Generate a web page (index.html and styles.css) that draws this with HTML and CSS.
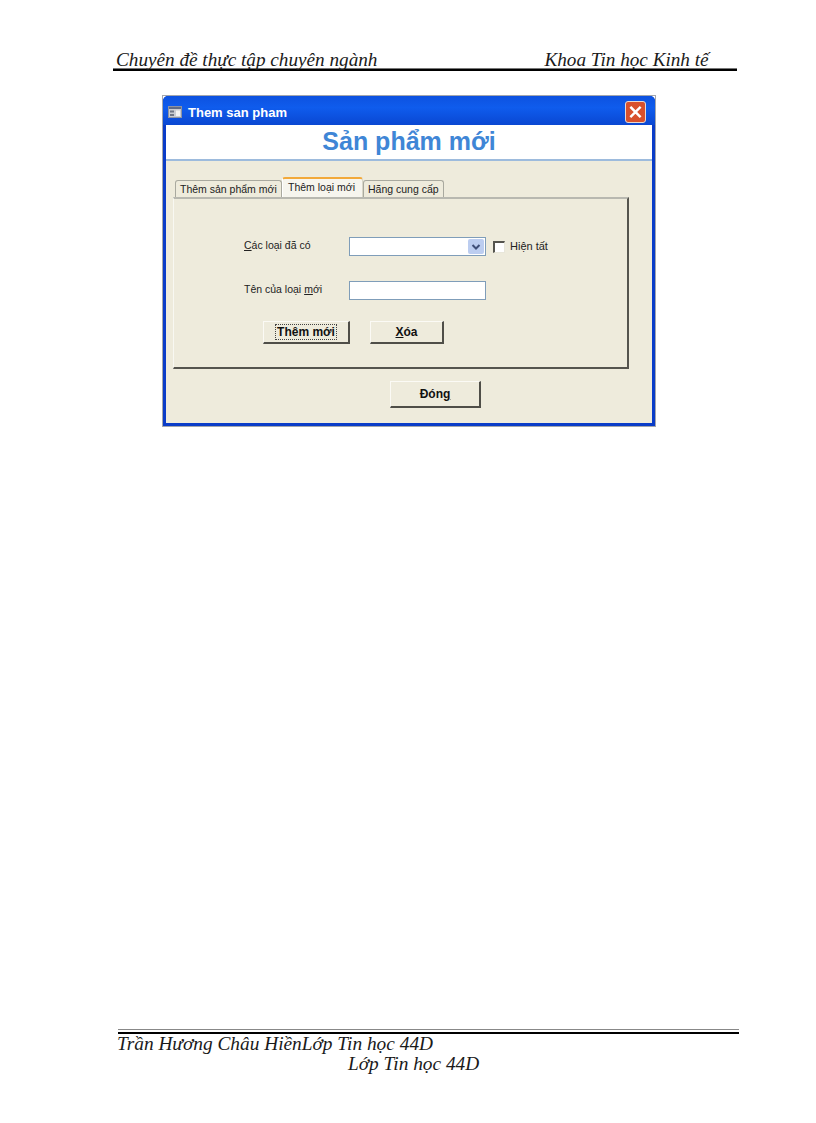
FILE: index.html
```html
<!DOCTYPE html>
<html lang="vi">
<head>
<meta charset="utf-8">
<title>Them san pham</title>
<link rel="stylesheet" href="styles.css">
</head>
<body>
<div class="page">
  <header class="doc-head">
    <span>Chuyên đề thực tập chuyên ngành</span>
    <span class="doc-head-right">Khoa Tin học Kinh tế</span>
  </header>

  <div class="shot">
    <div class="window">
      <div class="titlebar">
        <svg class="app-icon" viewBox="0 0 14 12" width="14" height="12">
          <rect x="0.5" y="0.5" width="13" height="11" fill="#c9ccd2" stroke="#8d93a3"/>
          <rect x="1" y="1" width="12" height="2" fill="#5f6b86"/>
          <rect x="2" y="4.5" width="4" height="2" fill="#6f7686"/>
          <rect x="2" y="8" width="4" height="2" fill="#6f7686"/>
          <rect x="8" y="4.5" width="4" height="5.500" fill="#f2f2f2"/>
        </svg>
        <span class="title-text">Them san pham</span>
        <span class="close-btn">
          <svg viewBox="0 0 20 20" width="20" height="20">
            <path d="M5.500 5.500 L14.500 14.500 M14.500 5.500 L5.500 14.500" stroke="#fff" stroke-width="2.600" stroke-linecap="square"/>
          </svg>
        </span>
      </div>
      <div class="banner">Sản phẩm mới</div>
      <div class="body">
        <div class="tabs">
          <div class="tab">Thêm sản phẩm mới</div>
          <div class="tab tab-active">Thêm loại mới</div>
          <div class="tab tab-last">Hãng cung cấp</div>
        </div>
        <div class="pane">
          <div class="form">
            <label class="label"><u>C</u>ác loại đã có</label>
            <div class="row">
              <div class="combo">
                <span class="combo-arrow">
                  <svg viewBox="0 0 12 12" width="12" height="12">
                    <path d="M2.500 4 L6 7.500 L9.500 4" fill="none" stroke="#3f4f78" stroke-width="2"/>
                  </svg>
                </span>
              </div>
              <span class="check"></span>
              <span class="check-label">Hiện tất</span>
            </div>
            <label class="label label-second">Tên của loại <u>m</u>ới</label>
            <div class="row row-second">
              <div class="input"></div>
            </div>
          </div>
          <div class="actions">
            <button class="btn btn-add"><span class="focus">Thêm mới</span></button>
            <button class="btn btn-del"><u>X</u>óa</button>
          </div>
        </div>
        <div class="foot-btn">
          <button class="btn btn-close">Đón<u>g</u></button>
        </div>
      </div>
    </div>
  </div>

  <footer class="doc-foot">
    <div class="foot-line">Trần Hương Châu HiềnLớp Tin học 44D</div>
    <div class="foot-line foot-second">Lớp Tin học 44D</div>
  </footer>
</div>
</body>
</html>
```
FILE: styles.css
```css
* { box-sizing: border-box; }
html, body { margin: 0; padding: 0; background: #fff; }
.page {
  width: 816px;
  height: 1123px;
  display: flex;
  flex-direction: column;
  font-family: "Liberation Serif", serif;
  color: #1a1a1a;
}
.doc-head {
  margin: 50px 79px 0 113px;
  padding: 0 0 0 3px;
  height: 21px;
  display: flex;
  border-bottom: 2px solid #000;
  box-shadow: inset 0 -1px 0 #777;
  font-style: italic;
  font-size: 19.200px;
  line-height: 20px;
  white-space: nowrap;
}
.doc-head-right { margin-left: 167px; }

.shot {
  margin: 24px 0 0 162px;
  width: 494px;
  height: 332px;
  border: 1px solid #a3a6ad;
  font-family: "Liberation Sans", Arial, sans-serif;
}
.window {
  height: 100%;
  display: flex;
  flex-direction: column;
  background: #0a3cc8;
  border-radius: 5px 5px 0 0;
  padding: 0 3px 3px;
}
.titlebar {
  height: 29px;
  display: flex;
  align-items: center;
  background: linear-gradient(#0d52e0, #0f5ced 40%, #0a47d2);
  margin: 0 -3px;
  padding: 3px 9px 0 5px;
  border-radius: 5px 5px 0 0;
}
.app-icon { flex: none; }
.title-text {
  margin-left: 6px;
  color: #fff;
  font-size: 13px;
  font-weight: bold;
}
.close-btn {
  margin-left: auto;
  width: 21px;
  height: 22px;
  border: 1px solid #e8d8d0;
  border-radius: 3px;
  background: #d8502c;
  display: flex;
  align-items: center;
  justify-content: center;
}
.banner {
  height: 36px;
  background: #fff;
  border-bottom: 2px solid #9dbbdd;
  text-align: center;
  color: #3f86d6;
  font-size: 25px;
  font-weight: bold;
  line-height: 32px;
}
.body {
  flex: 1;
  background: #eeebdc;
  padding: 15px 0 0 7px;
}
.tabs {
  display: flex;
  align-items: flex-end;
  height: 21px;
  padding-left: 2px;
}
.tab {
  height: 17px;
  padding: 1px 4px 0;
  background: #eeebdc;
  border: 1px solid #a9a99f;
  border-bottom: 0;
  border-radius: 3px 3px 0 0;
  font-size: 10.500px;
  line-height: 15px;
  color: #222;
  white-space: nowrap;
}
.tab:first-child { width: 107px; }
.tab-active {
  width: 81px;
  height: 20px;
  padding: 1px 5px 0;
  background: #f6f5ee;
  border-top: 2px solid #f2a93a;
  border-left-color: #fff;
  border-right-color: #d8d6c8;
}
.tab-last { width: 81px; }
.pane {
  width: 456px;
  height: 172px;
  border-top: 2px solid #b8b8b0;
  border-left: 1px solid #f8f8f2;
  border-right: 2px solid #55544e;
  border-bottom: 2px solid #55544e;
  padding: 38px 0 0 70px;
}
.form {
  display: grid;
  grid-template-columns: 105px 1fr;
  align-items: center;
  font-size: 10.500px;
  color: #222;
}
.label { display: block; padding-bottom: 3px; }
.label-second, .row-second { margin-top: 25px; }
.row { display: flex; align-items: center; }
.combo, .input {
  width: 137px;
  height: 19px;
  background: #fff;
  border: 1px solid #7f9db9;
}
.combo {
  display: flex;
  justify-content: flex-end;
  padding: 1px;
}
.combo-arrow {
  width: 16px;
  background: #bccdf0;
  border-radius: 2px;
  display: flex;
  align-items: center;
  justify-content: center;
}
.check {
  margin-left: 7px;
  width: 12px;
  height: 12px;
  background: #fff;
  border-top: 2px solid #55544e;
  border-left: 2px solid #55544e;
  border-right: 1px solid #e8e6da;
  border-bottom: 1px solid #e8e6da;
}
.check-label { margin-left: 5px; font-size: 11px; padding-bottom: 1px; }
.actions {
  display: flex;
  margin: 21px 0 0 19px;
}
.btn {
  display: block;
  padding: 0;
  height: 23px;
  font-family: inherit;
  font-size: 12px;
  font-weight: bold;
  color: #111;
  background: #eeebdc;
  border: 0;
  border-top: 1px solid #fbfaf5;
  border-left: 1px solid #fbfaf5;
  border-right: 2px solid #4f4e48;
  border-bottom: 2px solid #4f4e48;
}
.btn-add { width: 87px; }
.btn-del { width: 74px; margin-left: 20px; }
.focus { border: 1px dotted #444; padding: 0 1px; }
.foot-btn { margin: 12px 0 0 217px; }
.btn-close { width: 91px; height: 27px; }

.doc-foot {
  margin: 605px 77px 0 118px;
  border-top: 2px solid #000;
  box-shadow: 0 -2px 0 #fff, 0 -3px 0 #888;
  font-style: italic;
  font-size: 19.350px;
  line-height: 20px;
}
.foot-line { margin-left: -1px; white-space: nowrap; }
.foot-second { margin-left: 230px; }
```
